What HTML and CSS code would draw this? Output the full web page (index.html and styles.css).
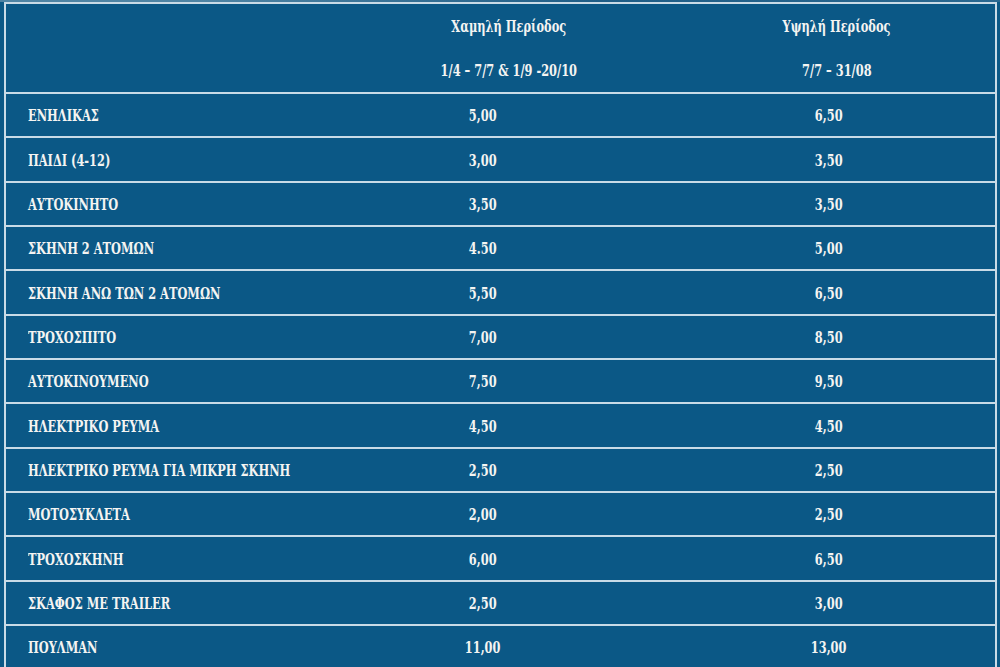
FILE: index.html
```html
<!DOCTYPE html>
<html lang="el">
<head>
<meta charset="utf-8">
<title>Τιμές</title>
<link rel="stylesheet" href="styles.css">
</head>
<body>
<div class="topband"></div>
<table class="prices">
  <thead>
    <tr>
      <th class="c1"></th>
      <th class="c2"><div class="hl"><span class="t">Χαμηλή Περίοδος</span></div><div class="hl"><span class="t">1/4 – 7/7 &amp; 1/9 -20/10</span></div></th>
      <th class="c3"><div class="hl"><span class="t">Υψηλή Περίοδος</span></div><div class="hl"><span class="t">7/7 – 31/08</span></div></th>
    </tr>
  </thead>
  <tbody>
    <tr><td class="c1"><span class="t">ΕΝΗΛΙΚΑΣ</span></td><td><span class="t">5,00</span></td><td><span class="t">6,50</span></td></tr>
    <tr><td class="c1"><span class="t">ΠΑΙΔΙ (4-12)</span></td><td><span class="t">3,00</span></td><td><span class="t">3,50</span></td></tr>
    <tr><td class="c1"><span class="t">ΑΥΤΟΚΙΝΗΤΟ</span></td><td><span class="t">3,50</span></td><td><span class="t">3,50</span></td></tr>
    <tr><td class="c1"><span class="t">ΣΚΗΝΗ 2 ΑΤΟΜΩΝ</span></td><td><span class="t">4.50</span></td><td><span class="t">5,00</span></td></tr>
    <tr><td class="c1"><span class="t">ΣΚΗΝΗ ΑΝΩ ΤΩΝ 2 ΑΤΟΜΩΝ</span></td><td><span class="t">5,50</span></td><td><span class="t">6,50</span></td></tr>
    <tr><td class="c1"><span class="t">ΤΡΟΧΟΣΠΙΤΟ</span></td><td><span class="t">7,00</span></td><td><span class="t">8,50</span></td></tr>
    <tr><td class="c1"><span class="t">ΑΥΤΟΚΙΝΟΥΜΕΝΟ</span></td><td><span class="t">7,50</span></td><td><span class="t">9,50</span></td></tr>
    <tr><td class="c1"><span class="t">ΗΛΕΚΤΡΙΚΟ ΡΕΥΜΑ</span></td><td><span class="t">4,50</span></td><td><span class="t">4,50</span></td></tr>
    <tr><td class="c1"><span class="t">ΗΛΕΚΤΡΙΚΟ ΡΕΥΜΑ ΓΙΑ ΜΙΚΡΗ ΣΚΗΝΗ</span></td><td><span class="t">2,50</span></td><td><span class="t">2,50</span></td></tr>
    <tr><td class="c1"><span class="t">ΜΟΤΟΣΥΚΛΕΤΑ</span></td><td><span class="t">2,00</span></td><td><span class="t">2,50</span></td></tr>
    <tr><td class="c1"><span class="t">ΤΡΟΧΟΣΚΗΝΗ</span></td><td><span class="t">6,00</span></td><td><span class="t">6,50</span></td></tr>
    <tr><td class="c1"><span class="t">ΣΚΑΦΟΣ ΜΕ TRAILER</span></td><td><span class="t">2,50</span></td><td><span class="t">3,00</span></td></tr>
    <tr><td class="c1"><span class="t">ΠΟΥΛΜΑΝ</span></td><td><span class="t">11,00</span></td><td><span class="t">13,00</span></td></tr>
  </tbody>
</table>
</body>
</html>
```

FILE: styles.css
```css
html, body {
  margin: 0;
  padding: 0;
  background: #0b5886;
  overflow: hidden;
}
.topband {
  height: 2px;
  background: linear-gradient(90deg, #4f84a4 0%, #4f84a4 20%, #1f5d86 60%, #2a6890 100%);
}
.prices {
  margin: 0 3px 0 4px;
  width: 993px;
  border-collapse: collapse;
  table-layout: fixed;
  color: #f4f4f2;
  font-family: "DejaVu Serif", serif;
  font-weight: bold;
  font-size: 17px;
  border-left: 2px solid #c9dbe7;
  border-right: 2px solid #c9dbe7;
  border-top: 2px solid #c9dbe7;
}
.prices th, .prices td {
  padding: 0;
  text-align: center;
  font-weight: bold;
  white-space: nowrap;
  border-bottom: 2px solid #c9dbe7;
}
.prices th.c1 { width: 298px; }
.prices th.c2 { width: 358px; }
.prices td {
  height: 42.35px;
}
.prices td.c1 {
  text-align: left;
  padding-left: 22px;
}
.t {
  display: inline-block;
  transform: scaleX(0.67);
  transform-origin: center;
}
.c1 .t {
  transform-origin: left center;
}
.hl {
  height: 44px;
  line-height: 44px;
}
th.c2 .hl { padding-left: 52px; }
th.c3 .hl { padding-left: 16px; }
```
